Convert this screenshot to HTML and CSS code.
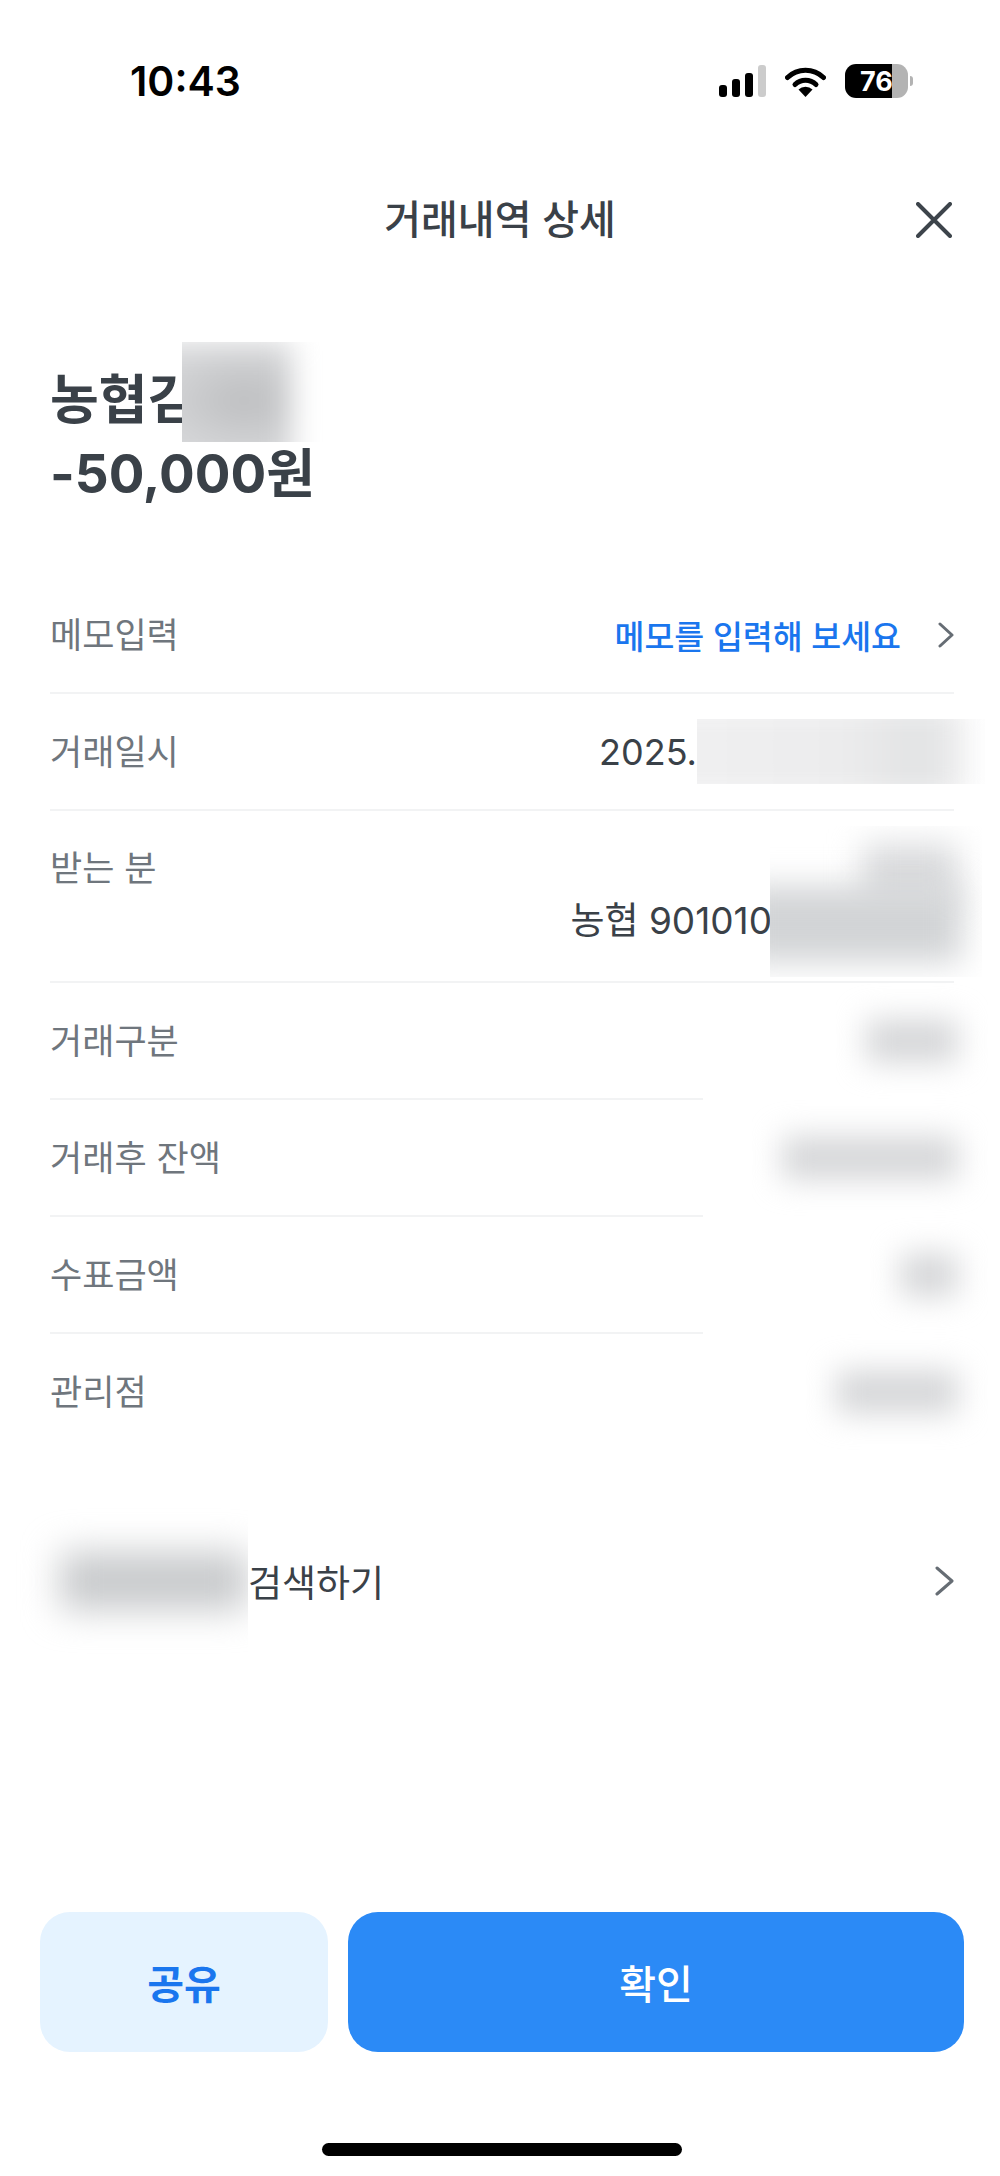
FILE: index.html
```html
<!DOCTYPE html>
<html lang="ko">
<head>
  <meta charset="UTF-8" />
  <meta name="viewport" content="width=device-width, initial-scale=1.0"/>
  <title>거래내역 상세</title>
  <link rel="stylesheet" href="styles.css">
</head>
<body>

  <div class="screen">

    <div class="status-bar">
      <div class="clock">10:43</div>
      <div class="status-icons">
        <div class="signal">
          <span class="bar bar-1"></span>
          <span class="bar bar-2"></span>
          <span class="bar bar-3"></span>
          <span class="bar bar-4"></span>
        </div>
        <svg class="wifi" viewBox="0 0 41 31" width="41" height="31">
          <path d="M2.5 11.5A26 26 0 0 1 38.5 11.5" fill="none" stroke="#000" stroke-width="5" stroke-linecap="round"/>
          <path d="M10 18.5A15 15 0 0 1 31 18.5" fill="none" stroke="#000" stroke-width="5" stroke-linecap="round"/>
          <path d="M20.5 31L13.5 23.5A10 10 0 0 1 27.5 23.5Z" fill="#000"/>
        </svg>
        <div class="battery">
          <div class="battery-body">
            <span class="battery-level">76</span>
          </div>
          <span class="battery-nub"></span>
        </div>
      </div>
    </div>

    <div class="nav">
      <div class="nav-title">거래내역 상세</div>
      <svg class="nav-close" viewBox="0 0 36 36" width="36" height="36">
        <path d="M2 2L34 34M34 2L2 34" fill="none" stroke="#3d444b" stroke-width="4" stroke-linecap="round"/>
      </svg>
    </div>

    <div class="summary">
      <div class="summary-name">농협김<span class="redact redact-name"><span class="smudge smudge-name"></span></span></div>
      <div class="summary-amount">-50,000원</div>
    </div>

    <div class="detail-list">
      <div class="row">
        <div class="row-label">메모입력</div>
        <div class="row-link">
          메모를 입력해 보세요
          <svg class="chevron" viewBox="0 0 16 26" width="16" height="26">
            <path d="M2 2L14 13L2 24" fill="none" stroke="#666d74" stroke-width="3" stroke-linecap="round" stroke-linejoin="round"/>
          </svg>
        </div>
      </div>
      <div class="divider"></div>

      <div class="row">
        <div class="row-label">거래일시</div>
        <div class="row-value">2025.<span class="redact redact-date"><span class="smudge smudge-date"></span></span></div>
      </div>
      <div class="divider"></div>

      <div class="row row-tall">
        <div class="row-top">
          <div class="row-label">받는 분</div>
        </div>
        <div class="row-value row-account">농협 901010<span class="redact redact-account"><span class="smudge smudge-holder"></span><span class="smudge smudge-account"></span></span></div>
      </div>
      <div class="divider"></div>

      <div class="row">
        <div class="row-label">거래구분</div>
        <span class="blob blob-type"></span>
      </div>
      <div class="divider divider-short"></div>

      <div class="row">
        <div class="row-label">거래후 잔액</div>
        <span class="blob blob-balance"></span>
      </div>
      <div class="divider divider-short"></div>

      <div class="row">
        <div class="row-label">수표금액</div>
        <span class="blob blob-check"></span>
      </div>
      <div class="divider divider-short"></div>

      <div class="row">
        <div class="row-label">관리점</div>
        <span class="blob blob-branch"></span>
      </div>
    </div>

    <div class="search-row">
      <div class="search-text"><span class="redact redact-search"><span class="smudge smudge-search"></span></span>검색하기</div>
      <svg class="chevron" viewBox="0 0 19 30" width="19" height="30">
        <path d="M2 2L17 15L2 28" fill="none" stroke="#666d74" stroke-width="3" stroke-linecap="round" stroke-linejoin="round"/>
      </svg>
    </div>

    <div class="actions">
      <div class="btn btn-share">공유</div>
      <div class="btn btn-confirm">확인</div>
    </div>

    <div class="home-bar"></div>

  </div>

</body>
</html>
```

FILE: styles.css
```css
* {
  box-sizing: border-box;
}

body {
  margin: 0;
  background-color: #fff;
  font-family: Inter, "Noto Sans CJK KR", sans-serif;
  color: #3a4148;
}

.screen {
  width: 1000px;
  height: 2176px;
  display: flex;
  flex-direction: column;
  overflow: hidden;
}

/* status bar */
.status-bar {
  height: 162px;
  display: flex;
  align-items: center;
  justify-content: space-between;
  padding: 0 87px 0 130px;
}

.clock {
  font-size: 41px;
  font-weight: 600;
  color: #000;
}

.status-icons {
  display: flex;
  align-items: center;
}

.signal {
  display: flex;
  align-items: flex-end;
  gap: 5px;
  height: 32px;
}

.bar {
  width: 8px;
  background-color: #000;
  border-radius: 3px;
}

.bar-1 { height: 12px; }
.bar-2 { height: 18px; }
.bar-3 { height: 24px; }
.bar-4 { height: 32px; background-color: #ccc; }

.wifi {
  margin-left: 19px;
}

.battery {
  display: flex;
  align-items: center;
  margin-left: 19px;
}

.battery-body {
  width: 63px;
  height: 34px;
  border-radius: 11px;
  overflow: hidden;
  background: linear-gradient(to right, #000 47px, #b3b3b3 47px);
  display: flex;
  align-items: center;
}

.battery-level {
  width: 63px;
  padding-left: 15px;
  font-size: 27px;
  font-weight: 700;
  color: #fff;
}

.battery-nub {
  width: 3px;
  height: 10px;
  margin-left: 2px;
  background-color: #b3b3b3;
  border-radius: 0 3px 3px 0;
}

/* header */
.nav {
  height: 114px;
  display: flex;
  align-items: center;
  justify-content: center;
  position: relative;
}

.nav-title {
  font-size: 40px;
  font-weight: 500;
  margin-bottom: 4px;
}

.nav-close {
  position: absolute;
  right: 48px;
  top: 40px;
}

/* name and amount */
.summary {
  margin: 87px 46px 66px 50px;
  font-size: 53px;
  font-weight: 700;
  line-height: 74px;
}

.summary-name,
.row-value,
.search-text {
  display: flex;
  align-items: center;
}

/* rows */
.detail-list {
  margin: 0 46px 0 50px;
}

.row {
  height: 115px;
  display: flex;
  align-items: center;
  justify-content: space-between;
}

.row-tall {
  height: 170px;
  flex-direction: column;
  align-items: stretch;
  justify-content: flex-start;
  padding-top: 34px;
}

.row-top {
  display: flex;
  height: 46px;
  align-items: center;
}

.row-label {
  font-size: 35px;
  color: #6f767d;
  line-height: 46px;
}

.row-value {
  justify-content: flex-end;
  font-size: 36px;
  line-height: 46px;
}

.row-account {
  margin-top: 7px;
  font-size: 37px;
}

.row-link {
  display: flex;
  align-items: center;
  gap: 37px;
  font-size: 32.5px;
  font-weight: 500;
  color: #1a76ee;
}

.divider {
  height: 2px;
  background-color: #f2f3f4;
}

.divider-short {
  width: 653px;
}

/* blurred out parts */
.redact {
  display: block;
  flex: none;
  overflow: hidden;
}

.smudge {
  display: block;
  filter: blur(14px);
}

.redact-name {
  width: 144px;
  height: 100px;
  margin: -21px 0 -5px -14px;
  background-color: #fff;
}

.smudge-name {
  height: 130px;
  width: 170px;
  margin: 0 0 0 -60px;
  background: radial-gradient(ellipse at 72% 45%, #bcbdbf 0, #d6d7d9 55%, #dddee0 100%);
}

.redact-date {
  width: 288px;
  height: 65px;
  margin: -10px -31px -9px 0;
}

.smudge-date {
  height: 90px;
  width: 310px;
  margin: -12px 0 0 -40px;
  background: linear-gradient(to right, #f0f0f1, #ececed 60%, #e2e3e4 85%, #eeeeef);
}

.redact-account {
  width: 212px;
  height: 151px;
  margin: -72px -28px -33px -2px;
  background-color: #fff;
}

.smudge-holder {
  height: 60px;
  width: 96px;
  margin: 18px 0 0 92px;
  filter: blur(16px);
  background-color: #dadbdd;
}

.smudge-account {
  height: 76px;
  width: 222px;
  margin: -18px 0 0 -30px;
  filter: blur(16px);
  background-color: #d2d4d6;
}

.blob {
  display: block;
  height: 44px;
  margin-right: -4px;
  filter: blur(15px);
  background-color: #d6d7d9;
}

.blob-type { width: 92px; }
.blob-balance { width: 176px; }
.blob-check { width: 58px; }
.blob-branch { width: 122px; }

/* search */
.search-row {
  margin: 82px 46px 0 50px;
  height: 100px;
  display: flex;
  align-items: center;
  justify-content: space-between;
}

.search-text {
  font-size: 37px;
}

.redact-search {
  width: 238px;
  height: 170px;
  margin: -60px 0 -60px -40px;
}

.smudge-search {
  height: 58px;
  width: 188px;
  margin: 56px 0 0 50px;
  filter: blur(18px);
  background-color: #c8cacc;
}

/* buttons */
.actions {
  margin-top: auto;
  display: flex;
  gap: 20px;
  padding: 0 36px 0 40px;
}

.btn {
  height: 140px;
  border-radius: 30px;
  display: flex;
  align-items: center;
  justify-content: center;
  font-size: 40px;
  font-weight: 600;
}

.btn-share {
  width: 288px;
  background-color: #e5f3ff;
  color: #1a76ee;
}

.btn-confirm {
  flex: 1;
  background-color: #2b8af6;
  color: #fff;
  font-weight: 500;
}

.home-bar {
  width: 360px;
  height: 13px;
  margin: 91px 0 20px 322px;
  border-radius: 7px;
  background-color: #000;
}
```
